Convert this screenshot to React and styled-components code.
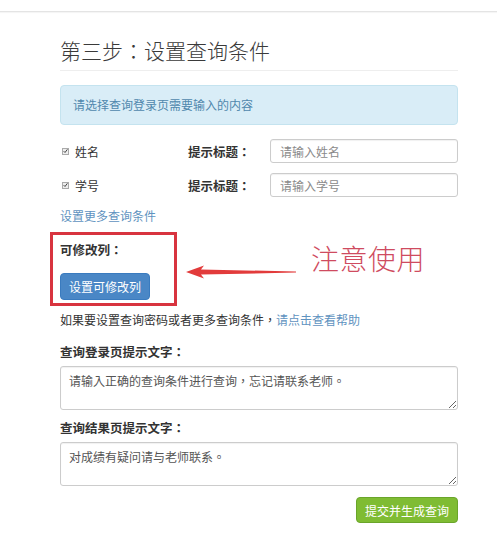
import React from "react";
import styled, { createGlobalStyle } from "styled-components";

const Global = createGlobalStyle`
  html, body { margin: 0; padding: 0; background: #fff; }
  body { font-family: "Noto Sans CJK SC", "Noto Sans", "Liberation Sans", sans-serif; color: #333; }
  * { box-sizing: border-box; }
`;

const P = styled.span`
  font-family: "Noto Sans CJK TC", "Noto Sans CJK SC", sans-serif;
`;

const TopBar = styled.div`
  height: 12px;
  border-bottom: 1px solid #e4e4e4;
  box-shadow: 0 1px 1px rgba(0,0,0,0.04);
`;

const Container = styled.div`
  padding: 0 39px 0 60px;
`;

const Title = styled.h2`
  margin: 23px 0 0;
  font-size: 21px;
  line-height: 30px;
  font-weight: 300;
  color: #3a3a3a;
  padding-bottom: 5px;
  border-bottom: 1px solid #eee;
`;

const Alert = styled.div`
  margin-top: 14px;
  height: 40px;
  line-height: 38px;
  padding: 0 12px;
  background: #d9edf7;
  border: 1px solid #c4e3ef;
  border-radius: 4px;
  color: #5088ad;
  font-size: 12px;
`;

const FieldRow = styled.div`
  display: flex;
  align-items: center;
  height: 24px;
  margin-top: ${(p) => p.$mt}px;
`;

const CheckLabel = styled.label`
  width: 128px;
  display: flex;
  align-items: center;
  font-size: 12px;
  color: #333;
`;

const Check = styled.span`
  width: 7px;
  height: 7px;
  margin: 0 6px 0 2px;
  border: 1px solid #aaa;
  background: #eee;
  display: inline-flex;
  align-items: center;
  justify-content: center;
`;

const FieldLabel = styled.span`
  width: 82px;
  font-size: 12.5px;
  font-weight: 700;
  color: #333;
`;

const TextInput = styled.input`
  width: 188px;
  height: 24px;
  border: 1px solid #ccc;
  border-radius: 3px;
  padding: 0 9px;
  font-size: 12px;
  font-family: inherit;
  color: #555;
  box-shadow: inset 0 1px 1px rgba(0,0,0,0.06);
  &::placeholder { color: #8a8a8a; }
`;

const Link = styled.a`
  display: block;
  margin-top: 10px;
  font-size: 12px;
  line-height: 18px;
  color: #5f93c0;
  text-decoration: none;
`;

const AnnotRow = styled.div`
  display: flex;
  align-items: flex-start;
  margin: 7px 0 0 -10px;
`;

const RedBox = styled.div`
  width: 127px;
  height: 74px;
  border: 3px solid #d8343f;
  padding: 6px 0 0 7px;
`;

const BoldLabel = styled.div`
  font-size: 12.5px;
  line-height: 18px;
  font-weight: 700;
  color: #333;
`;

const PrimaryButton = styled.button`
  margin-top: 14px;
  width: 90px;
  height: 27px;
  border: 1px solid #3a7bbf;
  border-radius: 4px;
  background: #4a87c6;
  color: #fff;
  font-size: 12px;
  font-family: inherit;
  padding: 0;
`;

const Arrow = styled.svg`
  margin: 33px 0 0 9px;
  flex: none;
`;

const Annotation = styled.div`
  margin: 11px 0 0 15px;
  font-size: 28px;
  line-height: 30px;
  font-weight: 300;
  color: #cf4b60;
  letter-spacing: 0.5px;
`;

const HelpText = styled.p`
  margin: 5px 0 0;
  font-size: 12px;
  line-height: 18px;
  color: #333;
  a { color: #5f93c0; text-decoration: none; }
`;

const SectionLabel = styled.div`
  margin-top: ${(p) => p.$mt}px;
  font-size: 12.5px;
  line-height: 18px;
  font-weight: 700;
  color: #333;
`;

const TextArea = styled.textarea`
  display: block;
  margin-top: 5px;
  width: 398px;
  height: 44px;
  border: 1px solid #ccc;
  border-radius: 3px;
  padding: 5px 8px;
  font-size: 12px;
  line-height: 18px;
  font-family: "Noto Sans CJK TC", "Noto Sans CJK SC", sans-serif;
  color: #555;
  box-shadow: inset 0 1px 1px rgba(0,0,0,0.06);
`;

const Actions = styled.div`
  display: flex;
  justify-content: flex-end;
  margin-top: 11px;
`;

const SuccessButton = styled.button`
  width: 102px;
  height: 26px;
  border: 1px solid #6aa52a;
  border-radius: 4px;
  background: #7fbc33;
  color: #fff;
  font-size: 12px;
  font-family: inherit;
  padding: 0;
`;

function CheckMark() {
  return (
    <svg width="6" height="6" viewBox="0 0 6 6">
      <path d="M0.8 3.2 L2.4 4.8 L5.3 1" fill="none" stroke="#444" strokeWidth="1.2" />
    </svg>
  );
}

export default function App() {
  return (
    <>
      <Global />
      <TopBar />
      <Container>
        <Title>第三步<P>：</P>设置查询条件</Title>
        <Alert>请选择查询登录页需要输入的内容</Alert>

        <FieldRow $mt={14}>
          <CheckLabel><Check><CheckMark /></Check>姓名</CheckLabel>
          <FieldLabel>提示标题<P>：</P></FieldLabel>
          <TextInput placeholder="请输入姓名" />
        </FieldRow>
        <FieldRow $mt={10}>
          <CheckLabel><Check><CheckMark /></Check>学号</CheckLabel>
          <FieldLabel>提示标题<P>：</P></FieldLabel>
          <TextInput placeholder="请输入学号" />
        </FieldRow>
        <Link href="#">设置更多查询条件</Link>

        <AnnotRow>
          <RedBox>
            <BoldLabel>可修改列<P>：</P></BoldLabel>
            <PrimaryButton>设置可修改列</PrimaryButton>
          </RedBox>
          <Arrow width="110" height="14" viewBox="0 0 110 14">
            <path d="M0 7 L18 0.5 L15 4.6 L110 6.4 L110 7.6 L15 9.6 L18 13.5 Z" fill="#e23b3b" />
          </Arrow>
          <Annotation>注意使用</Annotation>
        </AnnotRow>

        <HelpText>如果要设置查询密码或者更多查询条件<P>，</P><a href="#">请点击查看帮助</a></HelpText>

        <SectionLabel $mt={14}>查询登录页提示文字<P>：</P></SectionLabel>
        <TextArea defaultValue="请输入正确的查询条件进行查询，忘记请联系老师。" />

        <SectionLabel $mt={9}>查询结果页提示文字<P>：</P></SectionLabel>
        <TextArea defaultValue="对成绩有疑问请与老师联系。" />

        <Actions>
          <SuccessButton>提交并生成查询</SuccessButton>
        </Actions>
      </Container>
    </>
  );
}
